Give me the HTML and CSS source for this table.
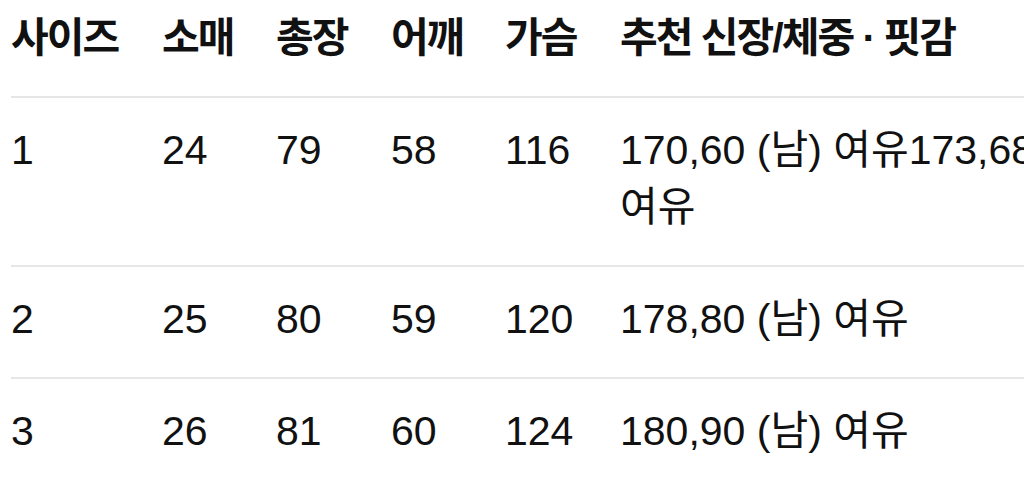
FILE: index.html
```html
<!DOCTYPE html>
<html lang="ko">
<head>
<meta charset="utf-8">
<link rel="stylesheet" href="styles.css">
</head>
<body>
<table class="size-table">
  <thead>
    <tr>
      <th class="c1">사이즈</th>
      <th class="c2">소매</th>
      <th class="c3">총장</th>
      <th class="c4">어깨</th>
      <th class="c5">가슴</th>
      <th class="c6">추천 신장/체중 · 핏감</th>
    </tr>
  </thead>
  <tbody>
    <tr>
      <td>1</td><td>24</td><td>79</td><td>58</td><td>116</td>
      <td>170,60 (남) 여유173,68 여유</td>
    </tr>
    <tr>
      <td>2</td><td>25</td><td>80</td><td>59</td><td>120</td>
      <td>178,80 (남) 여유</td>
    </tr>
    <tr>
      <td>3</td><td>26</td><td>81</td><td>60</td><td>124</td>
      <td>180,90 (남) 여유</td>
    </tr>
  </tbody>
</table>
</body>
</html>
```
FILE: styles.css
```css
html, body {
  margin: 0;
  padding: 0;
  background: #ffffff;
  overflow: hidden;
}
body {
  padding-left: 11px;
  font-family: "Liberation Sans", "Noto Sans CJK KR", sans-serif;
  color: #111111;
}
.size-table {
  border-collapse: collapse;
  table-layout: fixed;
  width: 1070px;
  font-size: 41px;
  line-height: 57px;
}
.size-table th,
.size-table td {
  text-align: left;
  vertical-align: top;
  padding: 0;
  word-break: keep-all;
}
.size-table th {
  font-weight: 700;
  padding-top: 10px;
  padding-bottom: 29px;
  letter-spacing: -2px;
}
.size-table td {
  font-weight: 400;
  padding-top: 24px;
  padding-bottom: 29px;
  border-top: 2px solid #e6e6e6;
}
.c1 { width: 151px; }
.c2 { width: 114px; }
.c3 { width: 115px; }
.c4 { width: 114px; }
.c5 { width: 115px; }
.c6 { width: 461px; }
```
